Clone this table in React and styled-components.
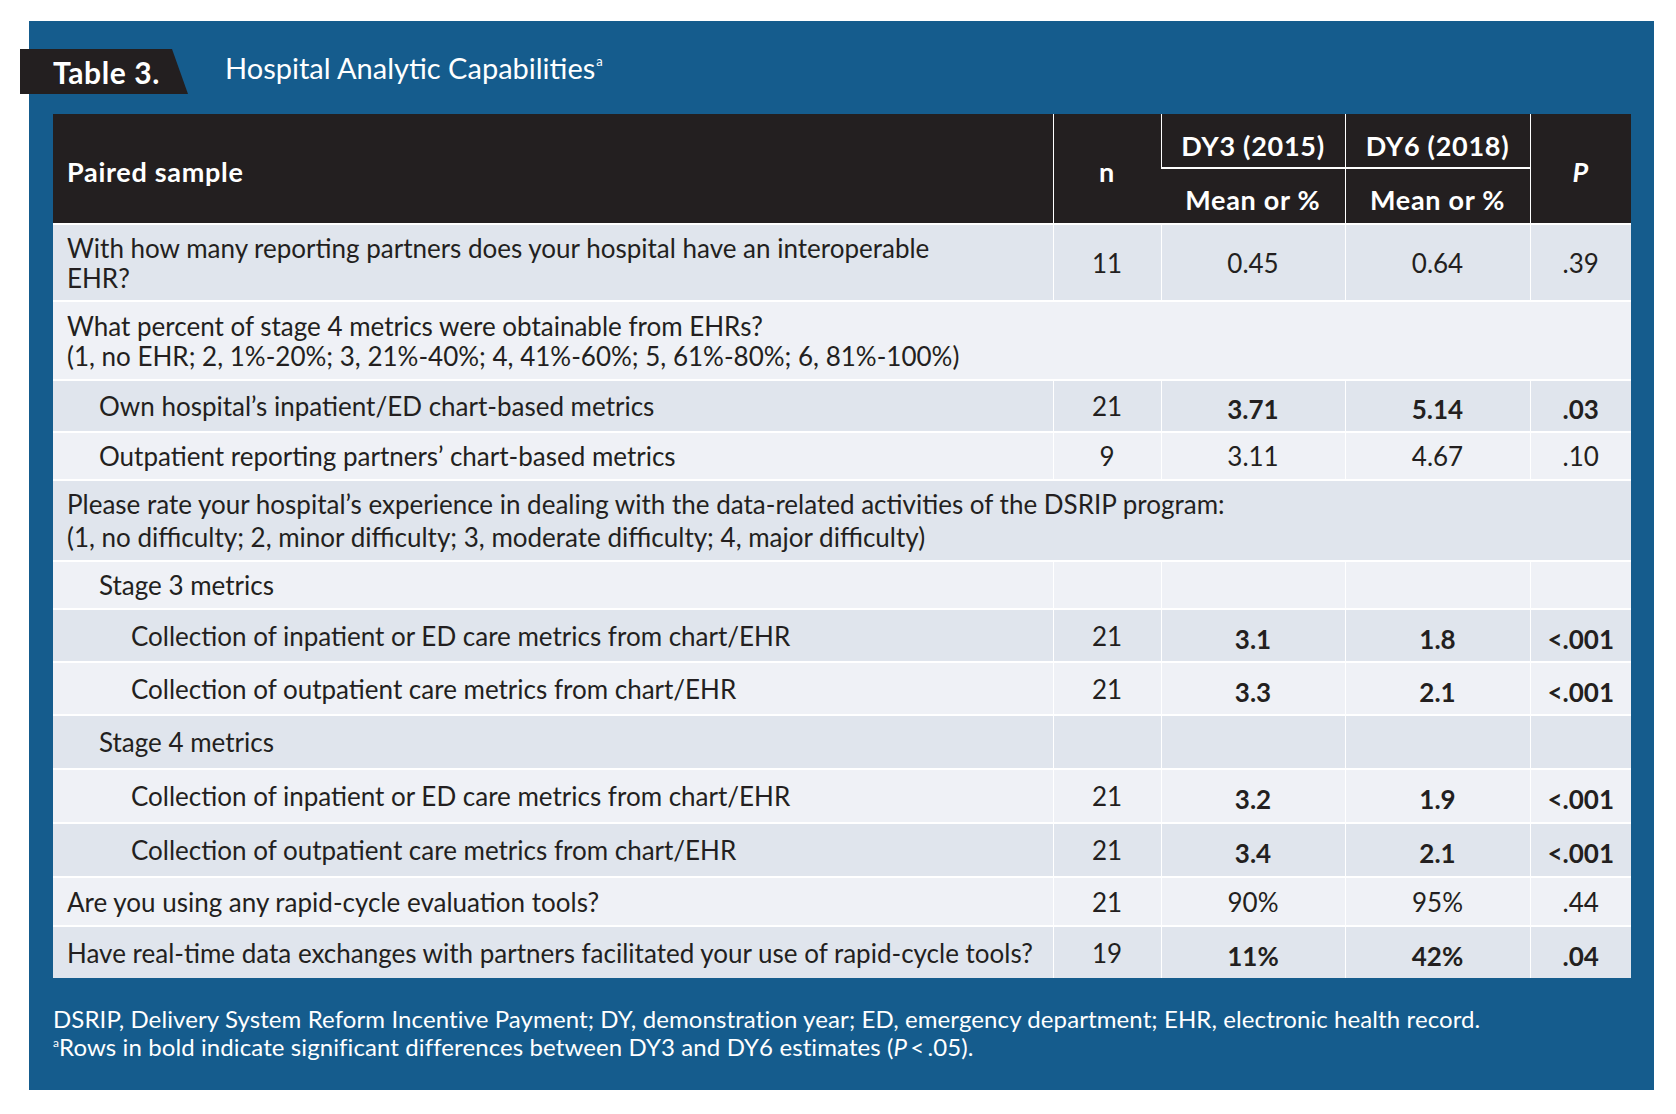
import React from 'react'
import styled, { createGlobalStyle } from 'styled-components'

const Global = createGlobalStyle`
  html, body {
    margin: 0;
    padding: 0;
    background: #ffffff;
  }
  body {
    font-family: Lato, "Open Sans", sans-serif;
    color: #231f20;
  }
`

const Panel = styled.section`
  box-sizing: border-box;
  margin: 21px 0 0 29px;
  width: 1625px;
  height: 1069px;
  padding: 28px 23px 0 24px;
  background: #155c8d;
`

const TitleBar = styled.header`
  display: flex;
  align-items: center;
  gap: 37px;
  height: 45px;
  margin-left: -33px;
`

const Tab = styled.div`
  box-sizing: border-box;
  display: flex;
  align-items: center;
  width: 168px;
  height: 45px;
  padding: 0 0 0 33px;
  background: #231f20;
  clip-path: polygon(0 0, 152px 0, 100% 100%, 0 100%);
  color: #ffffff;
  font-size: 30px;
  font-weight: 700;
  letter-spacing: 0.6px;
`

const Title = styled.h2`
  margin: 0;
  padding-bottom: 9px;
  color: #ffffff;
  font-size: 29px;
  font-weight: 400;
  letter-spacing: 0;
  sup {
    font-size: 13px;
    line-height: 0;
    vertical-align: 13px;
    margin-left: 1px;
  }
`

const Table = styled.table`
  margin-top: 20px;
  width: 1578px;
  border-collapse: collapse;
  table-layout: fixed;
  font-size: 26px;
`

const Head = styled.th`
  box-sizing: border-box;
  height: ${p => p.$h}px;
  padding: ${p => p.$top || 6}px ${p => (p.$left ? '14px' : '0')} 0;
  background: #231f20;
  color: #ffffff;
  font-weight: 700;
  font-size: 27px;
  letter-spacing: 0.7px;
  text-align: ${p => (p.$left ? 'left' : 'center')};
  vertical-align: middle;
  border-left: 1px solid #ffffff;
  border-bottom: ${p => (p.$rule ? '2px solid #ffffff' : '0')};
  &:first-child {
    border-left: 0;
  }
  em {
    font-style: italic;
  }
`

const Row = styled.tr`
  height: ${p => p.$h}px;
  background: ${p => (p.$shade ? '#e0e5ed' : '#eff1f6')};
  border-top: 2px solid #ffffff;
`

const Label = styled.td`
  box-sizing: border-box;
  padding: 0 4px 0 ${p => 14 + p.$level * 32}px;
  line-height: ${p => p.$lh || 30}px;
  white-space: nowrap;
  vertical-align: middle;
  letter-spacing: 0;
`

const Value = styled.td`
  box-sizing: border-box;
  padding: ${p => (p.$bold ? '6px 0 0' : '0')};
  border-left: 1px solid #ffffff;
  text-align: center;
  vertical-align: middle;
  font-weight: ${p => (p.$bold ? 700 : 400)};
  letter-spacing: 0;
`

const Notes = styled.footer`
  margin-top: 27px;
  color: #ffffff;
  font-size: 24px;
  line-height: 28px;
  letter-spacing: 0.1px;
  p {
    margin: 0;
  }
  sup {
    font-size: 12px;
    line-height: 0;
    vertical-align: 9px;
  }
`

const rows = [
  { label: ['With how many reporting partners does your hospital have an interoperable', 'EHR?'], level: 0, h: 77, cells: ['11', '0.45', '0.64', '.39'] },
  { label: ['What percent of stage 4 metrics were obtainable from EHRs?', '(1, no EHR; 2, 1%-20%; 3, 21%-40%; 4, 41%-60%; 5, 61%-80%; 6, 81%-100%)'], level: 0, h: 79, span: true },
  { label: ['Own hospital\u2019s inpatient/ED chart-based metrics'], level: 1, h: 52, cells: ['21', '3.71', '5.14', '.03'], bold: true },
  { label: ['Outpatient reporting partners\u2019 chart-based metrics'], level: 1, h: 48, cells: ['9', '3.11', '4.67', '.10'] },
  { label: ['Please rate your hospital\u2019s experience in dealing with the data-related activities of the DSRIP program:', '(1, no difficulty; 2, minor difficulty; 3, moderate difficulty; 4, major difficulty)'], level: 0, h: 81, span: true, lh: 33 },
  { label: ['Stage 3 metrics'], level: 1, h: 48, cells: ['', '', '', ''] },
  { label: ['Collection of inpatient or ED care metrics from chart/EHR'], level: 2, h: 53, cells: ['21', '3.1', '1.8', '<.001'], bold: true },
  { label: ['Collection of outpatient care metrics from chart/EHR'], level: 2, h: 53, cells: ['21', '3.3', '2.1', '<.001'], bold: true },
  { label: ['Stage 4 metrics'], level: 1, h: 54, cells: ['', '', '', ''] },
  { label: ['Collection of inpatient or ED care metrics from chart/EHR'], level: 2, h: 54, cells: ['21', '3.2', '1.9', '<.001'], bold: true },
  { label: ['Collection of outpatient care metrics from chart/EHR'], level: 2, h: 54, cells: ['21', '3.4', '2.1', '<.001'], bold: true },
  { label: ['Are you using any rapid-cycle evaluation tools?'], level: 0, h: 49, cells: ['21', '90%', '95%', '.44'] },
  { label: ['Have real-time data exchanges with partners facilitated your use of rapid-cycle tools?'], level: 0, h: 52, cells: ['19', '11%', '42%', '.04'], bold: true },
]

const LabelText = ({ lines }) =>
  lines.map((line, i) => (
    <React.Fragment key={i}>
      {i > 0 && <br />}
      {line}
    </React.Fragment>
  ))

export default function App() {
  return (
    <>
      <Global />
      <Panel>
        <TitleBar>
          <Tab>Table 3.</Tab>
          <Title>
            Hospital Analytic Capabilities<sup>a</sup>
          </Title>
        </TitleBar>
        <Table>
          <colgroup>
            <col style={{ width: 1000 }} />
            <col style={{ width: 108 }} />
            <col style={{ width: 184 }} />
            <col style={{ width: 185 }} />
            <col style={{ width: 101 }} />
          </colgroup>
          <thead>
            <tr>
              <Head rowSpan={2} $left $h={54}>Paired sample</Head>
              <Head rowSpan={2} $h={54}>n</Head>
              <Head $h={54} $top={9} $rule>DY3 (2015)</Head>
              <Head $h={54} $top={9} $rule>DY6 (2018)</Head>
              <Head rowSpan={2} $h={54}><em>P</em></Head>
            </tr>
            <tr>
              <Head $h={56}>Mean or %</Head>
              <Head $h={56}>Mean or %</Head>
            </tr>
          </thead>
          <tbody>
            {rows.map((r, i) => (
              <Row key={i} $h={r.h} $shade={i % 2 === 0}>
                <Label $level={r.level} $lh={r.lh} colSpan={r.span ? 5 : 1}>
                  <LabelText lines={r.label} />
                </Label>
                {!r.span &&
                  r.cells.map((c, j) => (
                    <Value key={j} $bold={r.bold && j > 0}>
                      {c}
                    </Value>
                  ))}
              </Row>
            ))}
          </tbody>
        </Table>
        <Notes>
          <p>DSRIP, Delivery System Reform Incentive Payment; DY, demonstration year; ED, emergency department; EHR, electronic health record.</p>
          <p>
            <sup>a</sup>Rows in bold indicate significant differences between DY3 and DY6 estimates (<i>P</i>&thinsp;&lt;&thinsp;.05).
          </p>
        </Notes>
      </Panel>
    </>
  )
}
